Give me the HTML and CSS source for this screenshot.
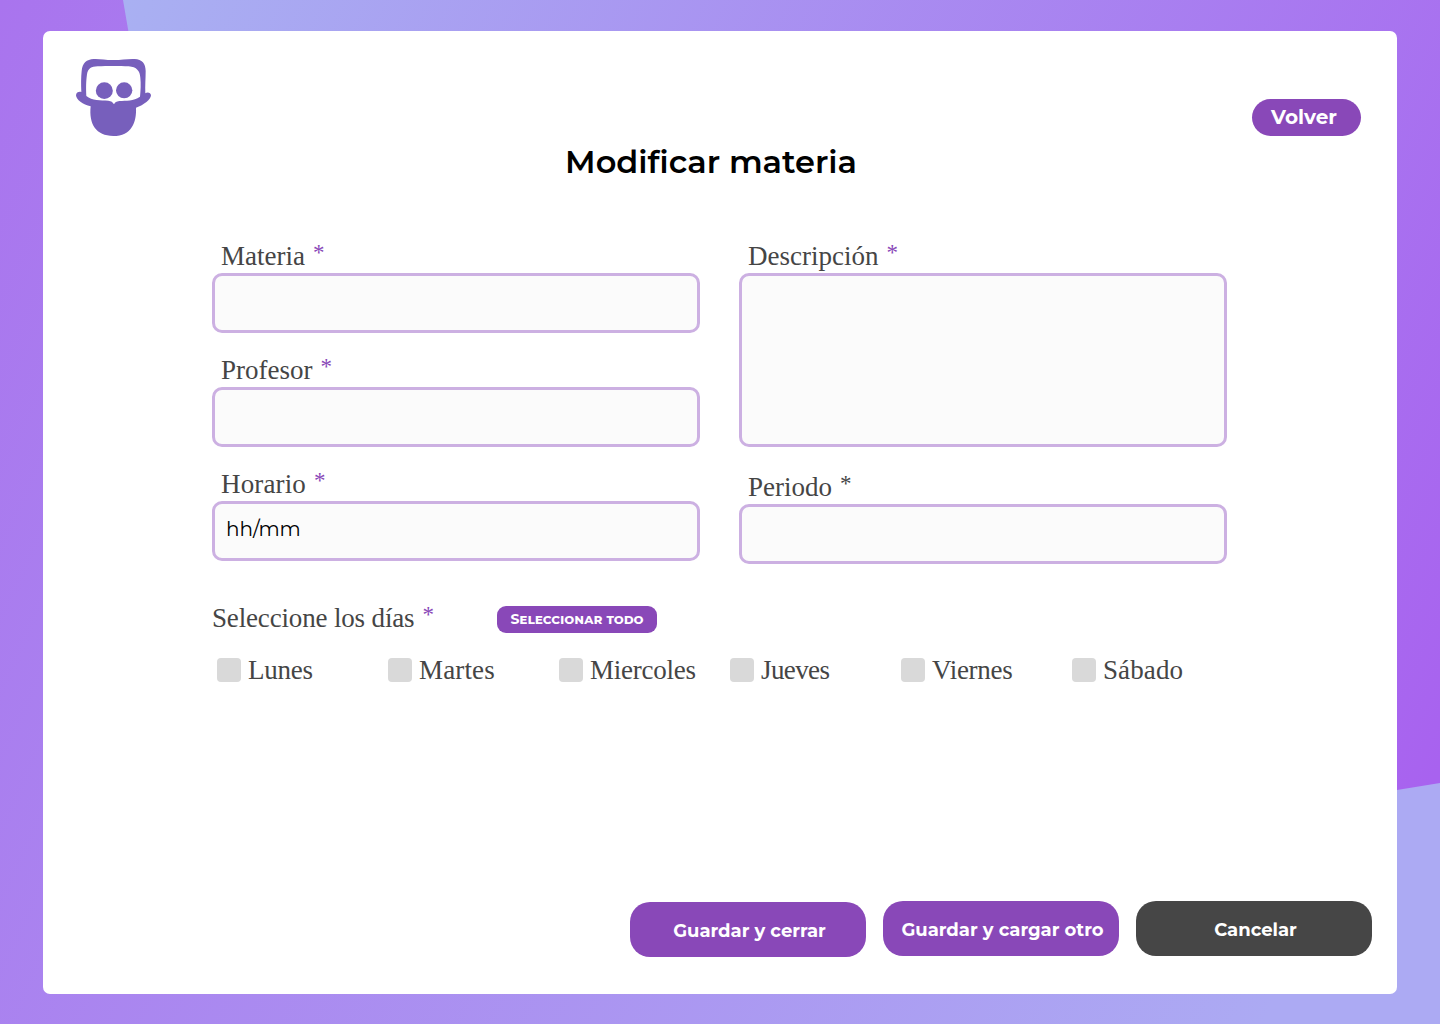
FILE: index.html
```html
<!DOCTYPE html>
<html lang="es">
<head>
<meta charset="utf-8">
<title>Modificar materia</title>
<link rel="stylesheet" href="styles.css">
</head>
<body>
<svg class="backdrop" viewBox="0 0 1440 1024" aria-hidden="true">
  <defs>
    <linearGradient id="base" gradientUnits="userSpaceOnUse" x1="0" y1="0" x2="1435" y2="646">
      <stop offset="0" stop-color="#a974ee"/><stop offset="1" stop-color="#acaaf3"/>
    </linearGradient>
    <linearGradient id="shape" gradientUnits="userSpaceOnUse" x1="107" y1="48" x2="1483" y2="668">
      <stop offset="0" stop-color="#a9b0f2"/><stop offset="1" stop-color="#a862ef"/>
    </linearGradient>
  </defs>
  <path fill="url(#base)" d="M0 0H1440V1024H0Z"/>
  <path fill="url(#shape)" d="M123 0L128.500 32C220 500 700 900 1397 790L1440 783V0Z"/>
</svg>
<main class="card">
  <header class="top">
    <svg class="logo" viewBox="45 39 231 237" aria-label="Logo" role="img">
      <path fill="#775fbc" fill-rule="evenodd" d="M64 141C63 118 63 96 65 78C67 54 80 43 101 42C121 41 141 46 162 45C184 45 204 41 224 42C246 43 257 56 257 78C257 100 255 122 256 145C261 140 273 142 273 151C273 162 252 181 228 188C230 231 215 273 160 273C108 273 86 237 92 184C69 180 48 163 48 151C48 141 58 139 64 141ZM79 153C78 127 78 110 81 88C84 70 94 65 113 64C140 63 180 63 206 64C230 66 240 78 241 98C243 115 242 137 240 155C220 169 199 166 178 168C169 169 165 172 162 178C158 171 154 168 145 167C122 166 96 168 79 153Z"/>
      <ellipse fill="#775fbc" cx="133" cy="137" rx="25.500" ry="25"/>
      <ellipse fill="#775fbc" cx="192.500" cy="136" rx="24.500" ry="24"/>
    </svg>
    <button class="back" type="button">Volver</button>
  </header>
  <h1 class="title">Modificar materia</h1>
  <form class="form">
    <div class="columns">
      <div class="column">
        <div class="group"><label class="label" for="materia">Materia<span class="star">*</span></label><input class="field" id="materia"></div>
        <div class="group"><label class="label" for="profesor">Profesor<span class="star">*</span></label><input class="field" id="profesor"></div>
        <div class="group"><label class="label label-horario" for="horario">Horario<span class="star">*</span></label><div class="field time" id="horario">hh/mm</div></div>
      </div>
      <div class="column column-right">
        <div class="group"><label class="label" for="desc">Descripción<span class="star">*</span></label><textarea class="field area" id="desc"></textarea></div>
        <div class="group"><label class="label" for="periodo">Periodo<span class="star star-dark">*</span></label><input class="field" id="periodo"></div>
      </div>
    </div>
    <div class="days-head">
      <div class="label days-label">Seleccione los días<span class="star">*</span></div>
      <button class="select-all" type="button">Seleccionar todo</button>
    </div>
    <div class="days">
      <label class="day"><span class="box"></span>Lunes</label>
      <label class="day day-martes"><span class="box"></span>Martes</label>
      <label class="day"><span class="box"></span>Miercoles</label>
      <label class="day day-jueves"><span class="box"></span>Jueves</label>
      <label class="day"><span class="box"></span>Viernes</label>
      <label class="day day-sabado"><span class="box"></span>Sábado</label>
    </div>
  </form>
  <footer class="actions">
    <button class="action first" type="button">Guardar y cerrar</button>
    <button class="action" type="button">Guardar y cargar otro</button>
    <button class="action cancel" type="button">Cancelar</button>
  </footer>
</main>
</body>
</html>
```
FILE: styles.css
```css
* { box-sizing: border-box; }
body {
  margin: 0;
  width: 1440px;
  height: 1024px;
  padding: 31px 43px 30px;
  overflow: hidden;
  font-family: Montserrat, Inter, sans-serif;
}
button { border: 0; padding: 0; font-family: inherit; color: #fff; background: #8948b8; white-space: nowrap; }
.backdrop { position: absolute; inset: 0; width: 1440px; height: 1024px; z-index: -1; }
.card {
  height: 963px;
  display: flex;
  flex-direction: column;
  background: #fff;
  border-radius: 7px;
}
.top {
  height: 105px;
  padding: 27px 36px 0 32px;
  display: flex;
  justify-content: space-between;
  align-items: flex-start;
}
.logo { width: 77px; height: 79px; }
.back {
  width: 109px;
  height: 37px;
  padding: 0 5px 1px 0;
  align-self: flex-end;
  border-radius: 19px;
  font-size: 20px;
  font-weight: 700;
}
.title {
  margin: 6px 18px 0 0;
  line-height: 40px;
  text-align: center;
  font-size: 32px;
  font-weight: 600;
  color: #000;
}
.form { margin: 57px 0 0 169px; width: 1015px; }
.columns { display: flex; gap: 39px; }
.column { width: 488px; display: flex; flex-direction: column; gap: 20px; }
.column-right { gap: 23px; }
.group { display: flex; flex-direction: column; }
.label {
  height: 34px;
  padding-left: 9px;
  display: flex;
  font: 27px/34px "Liberation Serif", serif;
  color: #454545;
  white-space: nowrap;
}
.label-horario { letter-spacing: 0.150px; }
.star { margin-left: 8px; font-size: 23px; line-height: 27px; color: #8948b8; }
.star-dark { color: #454545; }
.field {
  width: 488px;
  height: 60px;
  border: 3px solid #ccb0e2;
  border-radius: 10px;
  background: #fbfbfb;
  padding: 0 11px;
  outline: none;
  resize: none;
}
.area { height: 174px; }
.time { line-height: 50px; font-size: 20px; font-weight: 400; color: #000; }
.days-head { display: flex; margin-top: 37px; height: 44px; }
.days-label { width: 285px; padding-left: 0; letter-spacing: -0.160px; }
.select-all {
  width: 160px;
  height: 27px;
  margin-top: 5px;
  padding-bottom: 2px;
  border-radius: 9px;
  font-size: 14px;
  font-weight: 700;
  font-variant: small-caps;
}
.days { display: grid; grid-template-columns: repeat(6, 171px); margin: 8px 0 0 5px; }
.day {
  height: 34px;
  display: flex;
  align-items: center;
  gap: 7px;
  font: 27px/34px "Liberation Serif", serif;
  letter-spacing: -0.250px;
  color: #454545;
}
.day-martes { letter-spacing: 0.150px; }
.day-jueves { letter-spacing: -0.600px; }
.day-sabado { letter-spacing: 0.100px; }
.box { width: 24px; height: 24px; border-radius: 4px; background: #d9d9d9; }
.actions { margin: auto 25px 38px; display: flex; justify-content: flex-end; gap: 17px; }
.action {
  width: 236px;
  height: 55px;
  padding: 2px 0 0 3px;
  border-radius: 20px;
  font-size: 18px;
  font-weight: 700;
}
.first { margin: 1px 0 -1px; }
.cancel { background: #464646; }
```
